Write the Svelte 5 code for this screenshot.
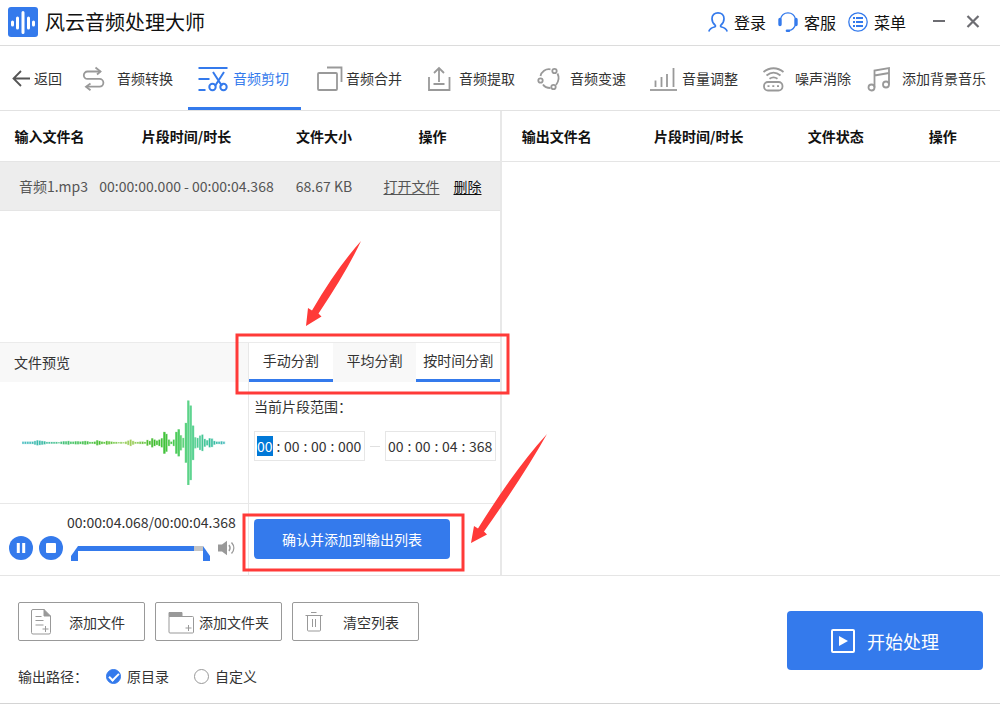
<script>
  const tabs = [
    { id: 'convert', label: '音频转换' },
    { id: 'cut', label: '音频剪切' },
    { id: 'merge', label: '音频合并' },
    { id: 'extract', label: '音频提取' },
    { id: 'speed', label: '音频变速' },
    { id: 'volume', label: '音量调整' },
    { id: 'noise', label: '噪声消除' },
    { id: 'music', label: '添加背景音乐' }
  ];
  let activeTab = $state('cut');
  let outputPath = $state('source');

  const splitModes = [
    { label: '手动分割', marked: true },
    { label: '平均分割', marked: false },
    { label: '按时间分割', marked: true }
  ];

  const startTime = ['00', '00', '00', '000'];
  const endTime = ['00', '00', '04', '368'];
  const units = ['时', '分', '秒', '毫秒'];

  const levels = [
    4, 4, 4, 4, 4, 6, 8, 7, 6, 5, 3, 3, 3, 3, 3, 2, 4, 5, 5, 6, 4, 4, 5, 5, 4, 5, 6, 5, 3, 3,
    4, 8, 6, 4, 3, 6, 5, 4, 3, 3, 2, 3, 2, 4, 7, 10, 6, 3, 3, 4, 4, 3, 9, 6, 14, 10, 7,
    10, 14, 33, 27, 10, 4, 10, 33, 41, 23, 15, 60, 127, 112, 52, 17, 15, 22, 25, 12, 8, 14,
    13, 6, 4, 4, 5, 4
  ];
  const stops = [
    [0, 75, 190, 195],
    [8, 55, 185, 165],
    [20, 70, 195, 105],
    [32, 70, 190, 45],
    [45, 160, 205, 90],
    [54, 60, 185, 40],
    [62, 70, 200, 70],
    [70, 95, 212, 145],
    [78, 50, 190, 150],
    [86, 75, 185, 200]
  ];
  function tint(i) {
    const k = stops.findIndex((s) => s[0] > i);
    const a = stops[k - 1];
    const b = stops[k];
    const t = (i - a[0]) / (b[0] - a[0]);
    const c = [1, 2, 3].map((n) => Math.round(a[n] + (b[n] - a[n]) * t));
    return `rgb(${c.join(',')})`;
  }
</script>

{#snippet timeField(name, parts, selected)}
  <div class="time" role="group" aria-label={name}>
    {#each parts as part, i}
      {#if i > 0}<span class="colon">:</span>{/if}
      <input
        type="text"
        class:ms={i === 3}
        class:picked={selected && i === 0}
        aria-label={name + units[i]}
        value={part}
      />
    {/each}
  </div>
{/snippet}

<div class="app">
  <header>
    <svg class="logo" width="30" height="30" viewBox="0 0 30 30" aria-hidden="true">
      <rect width="30" height="30" rx="3" fill="#347aec" />
      <g stroke="#fff" stroke-width="3" stroke-linecap="round">
        <path d="M4.500 15v3M9.500 11v10M15 5.500v20M20.500 11v10M25.500 15v3" />
      </g>
    </svg>
    <h1>风云音频处理大师</h1>
    <div class="account">
      <button>
        <svg width="20" height="22" viewBox="0 0 20 22" fill="none" stroke="#347aec" stroke-width="1.700">
          <path d="M.8 20.500c1-3 3.500-4 5.700-4.500 1.200-.3 1.200-1.300.5-2C5 12.300 4 10 4 7.700 4 4.200 6.500 1.800 10 1.800s6 2.400 6 5.900c0 2.300-1 4.600-3 6.300-.7.700-.7 1.700.5 2 2.200.5 4.700 1.500 5.700 4.500" />
        </svg>
        登录
      </button>
      <button>
        <svg width="20" height="22" viewBox="0 0 20 22" fill="none" stroke="#347aec">
          <path d="M2.500 8C3.500 4 6.500 1.800 10 1.800S16.500 4 17.500 8M17.500 13.500c-1 3.500-3.300 5.500-6.500 6" stroke-width="1.200" />
          <path d="M2 8.500v5M18 8.500v5" stroke-width="3.400" stroke-linecap="round" />
          <path d="M9 19.700h2" stroke-width="2.600" stroke-linecap="round" />
        </svg>
        客服
      </button>
      <button>
        <svg width="20" height="22" viewBox="0 0 20 22" fill="none" stroke="#347aec">
          <circle cx="10" cy="11" r="9.200" stroke-width="1.300" />
          <path d="M5 7h2M5 11h2M5 15h2M8 7h7M8 11h7M8 15h7" stroke-width="1.900" />
        </svg>
        菜单
      </button>
    </div>
    <div class="window">
      <button aria-label="最小化">
        <svg width="14" height="14" viewBox="0 0 14 14"><path d="M1 6h12" stroke="#6d6d72" stroke-width="2" /></svg>
      </button>
      <button aria-label="关闭">
        <svg width="14" height="14" viewBox="0 0 14 14"><path d="M1.500 1l11 11M12.500 1l-11 11" stroke="#6d6d72" stroke-width="2.200" /></svg>
      </button>
    </div>
  </header>

  <nav>
    <button class="back">
      <svg width="20" height="20" viewBox="0 0 20 20" fill="none" stroke="#555" stroke-width="1.800">
        <path d="M1.500 10.500H18M9 3L1.500 10.500 9 18" />
      </svg>
      返回
    </button>
    {#each tabs as tab}
      <button class="tab" class:active={activeTab === tab.id} onclick={() => (activeTab = tab.id)}>
        <svg width="34" height="32" viewBox="0 0 34 32" fill="none" stroke="currentColor" stroke-width="1.800" aria-hidden="true">
          {#if tab.id === 'convert'}
            <path d="M19.500 9.500H6.500a3.700 3.700 0 0 0 0 7.400h12a3.900 3.900 0 0 1 0 7.800H5.500" />
            <path d="M14.500 5.500l5 4-3.500 3M9.500 21.500l-4.500 3.200 4.500 3.500" />
          {:else if tab.id === 'cut'}
            <g stroke-width="2">
              <path d="M1.500 6h29M1.500 17h11M1.500 28h7" />
              <path d="M16 10l9 14M27 10l-9 14" />
              <circle cx="15.500" cy="25" r="3.200" />
              <circle cx="26.500" cy="25" r="3.200" />
            </g>
          {:else if tab.id === 'merge'}
            <rect x="8" y="11" width="19" height="17" rx="1" />
            <path d="M17 5.500h14.500V20" />
          {:else if tab.id === 'extract'}
            <path d="M6 15v13h20.500V15M10.500 22h11M16 20V6.500M11 11l5-5 5 5" />
          {:else if tab.id === 'speed'}
            <circle cx="20.500" cy="9" r="2.200" />
            <circle cx="6.500" cy="18.500" r="2.200" />
            <circle cx="19.500" cy="25" r="2.200" />
            <path d="M16.500 7.300C11.500 6.500 7.500 9.500 6.500 14M9 22.500c1.500 2.500 4 3.500 7.500 3.500M23.500 11.500c2 4 1.500 7.500-1.500 11.500" />
          {:else if tab.id === 'volume'}
            <path d="M4 28h27" />
            <path d="M9.500 18.500V25M15.500 15v10M21 12v13M27.500 6v19" />
          {:else if tab.id === 'noise'}
            <rect x="5" y="20" width="18.500" height="8.500" rx="4" />
            <path d="M8.500 24.200h2M13.300 24.200h2M18 24.200h2" />
            <path d="M4.500 10c6-5 14-5 20 0M7.500 13.500c4.500-3.700 9.500-3.700 14 0M10.500 16.800c2.800-2 5.200-2 8 0" />
          {:else}
            <circle cx="5.500" cy="25.500" r="3" />
            <circle cx="20" cy="22.500" r="3" />
            <path d="M8.500 25.500V8.500L23 6v16.500M8.500 13.500L23 11" />
          {/if}
        </svg>
        {tab.label}
      </button>
    {/each}
  </nav>

  <main>
    <section class="input">
      <table class="source">
        <thead>
          <tr><th>输入文件名</th><th>片段时间/时长</th><th>文件大小</th><th>操作</th></tr>
        </thead>
        <tbody>
          <tr>
            <td>音频1.mp3</td>
            <td>00:00:00.000 - 00:00:04.368</td>
            <td>68.67 KB</td>
            <td><a href="#open">打开文件</a><a class="remove" href="#remove">删除</a></td>
          </tr>
        </tbody>
      </table>

      <div class="editor">
        <div class="preview">
          <h2>文件预览</h2>
          <div class="wave">
            <svg viewBox="0 0 608 256" role="img" aria-label="波形">
              {#each levels as level, i}
                <rect x={i * 7.15} y={128 - level} width="7" height={level * 2} fill={tint(i)} opacity="0.4" />
                <rect x={i * 7.15 + 1} y={129 - level} width={level > 28 ? 6 : 4} height={level * 2 - 2} fill={tint(i)} />
              {/each}
            </svg>
          </div>
          <div class="player">
            <button aria-label="暂停">
              <svg width="24" height="24" viewBox="0 0 24 24"><circle cx="12" cy="12" r="12" fill="#347aec" /><path d="M9.300 7v10M14.700 7v10" stroke="#fff" stroke-width="3" /></svg>
            </button>
            <button aria-label="停止">
              <svg width="24" height="24" viewBox="0 0 24 24"><circle cx="12" cy="12" r="12" fill="#347aec" /><rect x="7" y="7" width="10" height="10" rx="1" fill="#fff" /></svg>
            </button>
            <div class="progress">
              <output>00:00:04.068/00:00:04.368</output>
              <div class="seek">
                <div class="track">
                  <svg width="7" height="15" viewBox="0 0 7 15"><path d="M7 0v15H0v-5z" fill="#347aec" /></svg>
                  <input type="range" aria-label="播放进度" min="0" max="4368" value="4068" />
                  <svg width="7" height="15" viewBox="0 0 7 15"><path d="M0 0v15h7v-5z" fill="#347aec" /></svg>
                </div>
                <button aria-label="音量">
                  <svg width="18" height="16" viewBox="0 0 18 16" fill="none" stroke="#999" stroke-width="1.400">
                    <path d="M0 4.500h4L9 .8v14.400L4 11.500H0z" fill="#999" stroke="none" />
                    <path d="M11 5c1.300 1.800 1.300 4.200 0 6M13.500 2.500c3 3.300 3 7.700 0 11" />
                  </svg>
                </button>
              </div>
            </div>
          </div>
        </div>

        <div class="split">
          <div class="modes">
            {#each splitModes as mode}
              <button class:marked={mode.marked}>{mode.label}</button>
            {/each}
          </div>
          <div class="range">
            <p>当前片段范围：</p>
            <div class="times">
              {@render timeField('开始', startTime, true)}
              <span class="dash"></span>
              {@render timeField('结束', endTime, false)}
            </div>
          </div>
          <div class="confirm"><button>确认并添加到输出列表</button></div>
        </div>

        <svg class="marks" aria-hidden="true">
          <g fill="none" stroke="#ff3a38" stroke-width="3">
            <rect x="237" y="-8" width="271" height="58" />
            <rect x="244" y="172" width="219" height="55" />
          </g>
          <g fill="#ff3a38">
            <path d="M361 -102Q347 -72 318.500 -29.500L321.500 -26.500L306 -17L308 -35L312 -32.500Q336 -74 361 -102Z" />
            <path d="M547 91Q524 132 484 188.500L487 191.500L471 200L474 183L478 185.500Q515 126 547 91Z" />
          </g>
        </svg>
      </div>
    </section>

    <section class="output">
      <table class="result">
        <thead>
          <tr><th>输出文件名</th><th>片段时间/时长</th><th>文件状态</th><th>操作</th></tr>
        </thead>
      </table>
    </section>
  </main>

  <footer>
    <div class="options">
      <div class="actions">
        <button>
          <svg width="28" height="28" viewBox="0 0 28 28" fill="none" stroke="#999">
            <path d="M14.500 1.500H3a1.500 1.500 0 0 0-1.500 1.500v21.500A1.500 1.500 0 0 0 3 26h16a1.500 1.500 0 0 0 1.500-1.500V8" />
            <path d="M14 1.500v6.500h6.500z" fill="#999" />
            <path d="M5.500 8.500h6M5.500 12.500h8M5.500 17h8M15.500 18v6M12.500 21h6" />
          </svg>
          <span>添加文件</span>
        </button>
        <button>
          <svg width="28" height="28" viewBox="0 0 28 28" fill="none" stroke="#999">
            <path d="M2 8.500v15.500a1 1 0 0 0 1 1h22.500a1 1 0 0 0 1-1V9.500a1 1 0 0 0-1-1z" />
            <path d="M2 4.500h13v4H2z" fill="#999" />
            <path d="M21.500 17v6M18.500 20h6" />
          </svg>
          <span>添加文件夹</span>
        </button>
        <button>
          <svg width="28" height="28" viewBox="0 0 28 28" fill="none" stroke="#999">
            <path d="M1.500 7.500h17M7 4.500h5.500M3.500 7.500v14.500a1 1 0 0 0 1 1h11a1 1 0 0 0 1-1V7.500M8.500 11v8M11.500 11v8" />
          </svg>
          <span>清空列表</span>
        </button>
      </div>
      <div class="path">
        <span class="caption">输出路径：</span>
        <label><input type="radio" name="path" value="source" bind:group={outputPath} />原目录</label>
        <label><input type="radio" name="path" value="custom" bind:group={outputPath} />自定义</label>
      </div>
    </div>
    <button class="start">
      <svg width="24" height="24" viewBox="0 0 24 24"><rect x="1" y="1" width="22" height="22" rx="1" fill="none" stroke="#fff" stroke-width="2" /><path d="M8 7l9 5-9 5z" fill="#fff" /></svg>
      开始处理
    </button>
  </footer>
</div>

<style>
  :global(body) {
    background: #fff;
  }
  .app,
  button,
  input {
    font-family: 'Noto Sans CJK SC', 'Noto Sans', sans-serif;
    font-size: 14px;
    line-height: 20px;
    color: #333;
  }
  .app {
    display: flex;
    flex-direction: column;
    min-height: 100vh;
    box-sizing: border-box;
    border-bottom: 1px solid #d4d4d4;
  }
  .app * {
    box-sizing: border-box;
  }
  button {
    border: 0;
    padding: 0;
    background: none;
    white-space: nowrap;
  }
  svg {
    display: block;
    flex: none;
  }
  h1,
  h2,
  p {
    margin: 0;
    font-weight: 400;
  }

  header {
    display: flex;
    align-items: center;
    height: 46px;
    padding: 0 20px 2px 8px;
    border-bottom: 1px solid #dcdcdc;
  }
  h1 {
    margin-left: 7px;
    font-size: 20px;
    line-height: 28px;
    color: #111;
  }
  .account {
    display: flex;
    gap: 12px;
    margin-left: auto;
  }
  .account button {
    display: flex;
    align-items: center;
    gap: 6px;
    font-size: 16px;
    line-height: 22px;
    color: #111;
  }
  .window {
    display: flex;
    gap: 20px;
    margin-left: 26px;
  }

  nav {
    display: grid;
    grid-template-columns: 72fr 116fr 113fr 113fr 111fr 112fr 113fr 107fr 143fr;
    height: 65px;
    border-bottom: 1px solid #e2e2e2;
  }
  nav button {
    display: flex;
    align-items: center;
    gap: 2px;
  }
  .back {
    padding-left: 12px;
  }
  .tab {
    padding-left: 9px;
    border-bottom: 3px solid transparent;
    border-top: 3px solid transparent;
  }
  .tab svg {
    color: #999;
  }
  .tab.active {
    color: #347aec;
    border-bottom-color: #347aec;
  }
  .tab.active svg {
    color: #347aec;
  }

  main {
    flex: 1;
    display: grid;
    grid-template-columns: 1fr 1fr;
    border-bottom: 1px solid #e5e5e5;
  }
  .input {
    display: flex;
    flex-direction: column;
  }
  .output {
    border-left: 2px solid #e8e8e8;
  }
  table {
    width: 100%;
    table-layout: fixed;
    border-collapse: separate;
    border-spacing: 0;
  }
  th,
  td {
    padding: 0;
    text-align: center;
    white-space: nowrap;
    border-bottom: 1px solid #e5e5e5;
  }
  th {
    height: 51px;
    font-weight: 700;
    color: #111;
  }
  td {
    height: 49px;
    background: #ededed;
    color: #555;
  }
  td:first-child {
    padding-left: 8px;
  }
  td:last-child,
  .source th:last-child {
    padding-right: 9px;
  }
  .source th:nth-child(1) {
    width: 99px;
  }
  .source th:nth-child(2) {
    width: 35%;
  }
  .source th:nth-child(3) {
    width: 20%;
  }
  .result th:nth-child(1) {
    width: 22%;
  }
  .result th:nth-child(2) {
    width: 35%;
  }
  .result th:nth-child(3) {
    width: 20%;
  }
  a {
    color: #555;
    text-underline-offset: 2px;
  }
  .remove {
    margin-left: 14px;
    color: #111;
  }

  .editor {
    position: relative;
    display: grid;
    grid-template-columns: minmax(0, 248fr) minmax(0, 252fr);
    margin-top: auto;
    border-top: 1px solid #ebebeb;
  }
  .preview,
  .split {
    display: grid;
    grid-template-columns: minmax(0, 1fr);
    grid-template-rows: 39px 122px 71px;
  }
  .split {
    border-left: 1px solid #e8e8e8;
  }
  h2 {
    padding: 9px 14px;
    font-size: 14px;
    line-height: 20px;
    background: #f8f8f8;
  }
  .wave {
    display: flex;
    align-items: center;
    justify-content: center;
    border-bottom: 1px solid #e8e8e8;
  }
  .wave svg {
    width: 82%;
  }
  .player {
    display: flex;
    align-items: flex-end;
    gap: 6px;
    padding: 0 12px 15px 9px;
  }
  .progress {
    flex: 1;
    min-width: 0;
    margin-left: 2px;
  }
  .progress output {
    display: block;
    margin-left: -4px;
    white-space: nowrap;
  }
  .seek {
    display: flex;
    align-items: flex-start;
    gap: 8px;
    padding-top: 8px;
  }
  .track {
    flex: 1;
    display: flex;
    align-items: flex-start;
    min-width: 0;
    height: 20px;
    padding-top: 6px;
  }
  .track input {
    flex: 1;
    min-width: 0;
    height: 5px;
    margin: 0;
    appearance: none;
    background: linear-gradient(to right, #347aec 93%, #c4c4c4 93%);
  }
  .track input::-webkit-slider-thumb {
    appearance: none;
    width: 1px;
    height: 5px;
  }

  .modes {
    display: grid;
    grid-template-columns: repeat(3, 1fr);
    background: #f8f8f8;
  }
  .modes button {
    padding-bottom: 2px;
    border-bottom: 3px solid transparent;
  }
  .modes .marked {
    background: #fff;
    border-bottom-color: #347aec;
  }
  .range {
    padding: 14px 4px 0 5px;
    border-bottom: 1px solid #e8e8e8;
  }
  .times {
    display: flex;
    align-items: center;
    justify-content: space-between;
    margin-top: 15px;
  }
  .time {
    display: flex;
    align-items: center;
    height: 30px;
    padding: 0 2px;
    border: 1px solid #e6e6e6;
  }
  .time input {
    width: 16px;
    height: 20px;
    padding: 0;
    border: 0;
    outline: 0;
    background: none;
  }
  .time .ms {
    width: 24px;
  }
  .time .picked {
    background: #0078d7;
    color: #fff;
  }
  .colon {
    width: 11px;
    text-align: center;
  }
  .dash {
    width: 10px;
    border-top: 1px solid #e0e0e0;
  }
  .confirm {
    padding: 15px 50px 0 5px;
  }
  .confirm button {
    width: 100%;
    height: 40px;
    border-radius: 4px;
    background: #347aec;
    color: #fff;
  }
  .marks {
    position: absolute;
    top: 0;
    left: 0;
    width: 1px;
    height: 1px;
    overflow: visible;
    pointer-events: none;
  }

  footer {
    display: flex;
    justify-content: space-between;
    align-items: flex-start;
    height: 127px;
    padding: 26px 17px 0 18px;
  }
  .actions {
    display: flex;
    gap: 10px;
  }
  .actions button {
    display: flex;
    align-items: center;
    width: 127px;
    height: 39px;
    padding: 0 8px 0 11px;
    border: 1px solid #999;
    border-radius: 2px;
  }
  .actions span {
    flex: 1;
  }
  .path {
    display: flex;
    align-items: center;
    margin-top: 25px;
  }
  .caption {
    width: 88px;
  }
  .path label {
    display: flex;
    align-items: center;
    gap: 6px;
    margin-right: 25px;
  }
  .path input {
    width: 15px;
    height: 15px;
    margin: 0;
    appearance: none;
    border: 1px solid #999;
    border-radius: 50%;
  }
  .path input:checked {
    border-color: #347aec;
    background: #347aec;
  }
  .path input:checked::after {
    content: '';
    display: block;
    width: 8px;
    height: 4px;
    margin: 3px 2px;
    border: solid #fff;
    border-width: 0 0 2px 2px;
    transform: rotate(-45deg);
  }
  .start {
    display: flex;
    align-items: center;
    justify-content: center;
    gap: 12px;
    width: 196px;
    height: 59px;
    margin-top: 9px;
    border-radius: 4px;
    background: #347aec;
    font-size: 18px;
    line-height: 26px;
    color: #fff;
  }
</style>
